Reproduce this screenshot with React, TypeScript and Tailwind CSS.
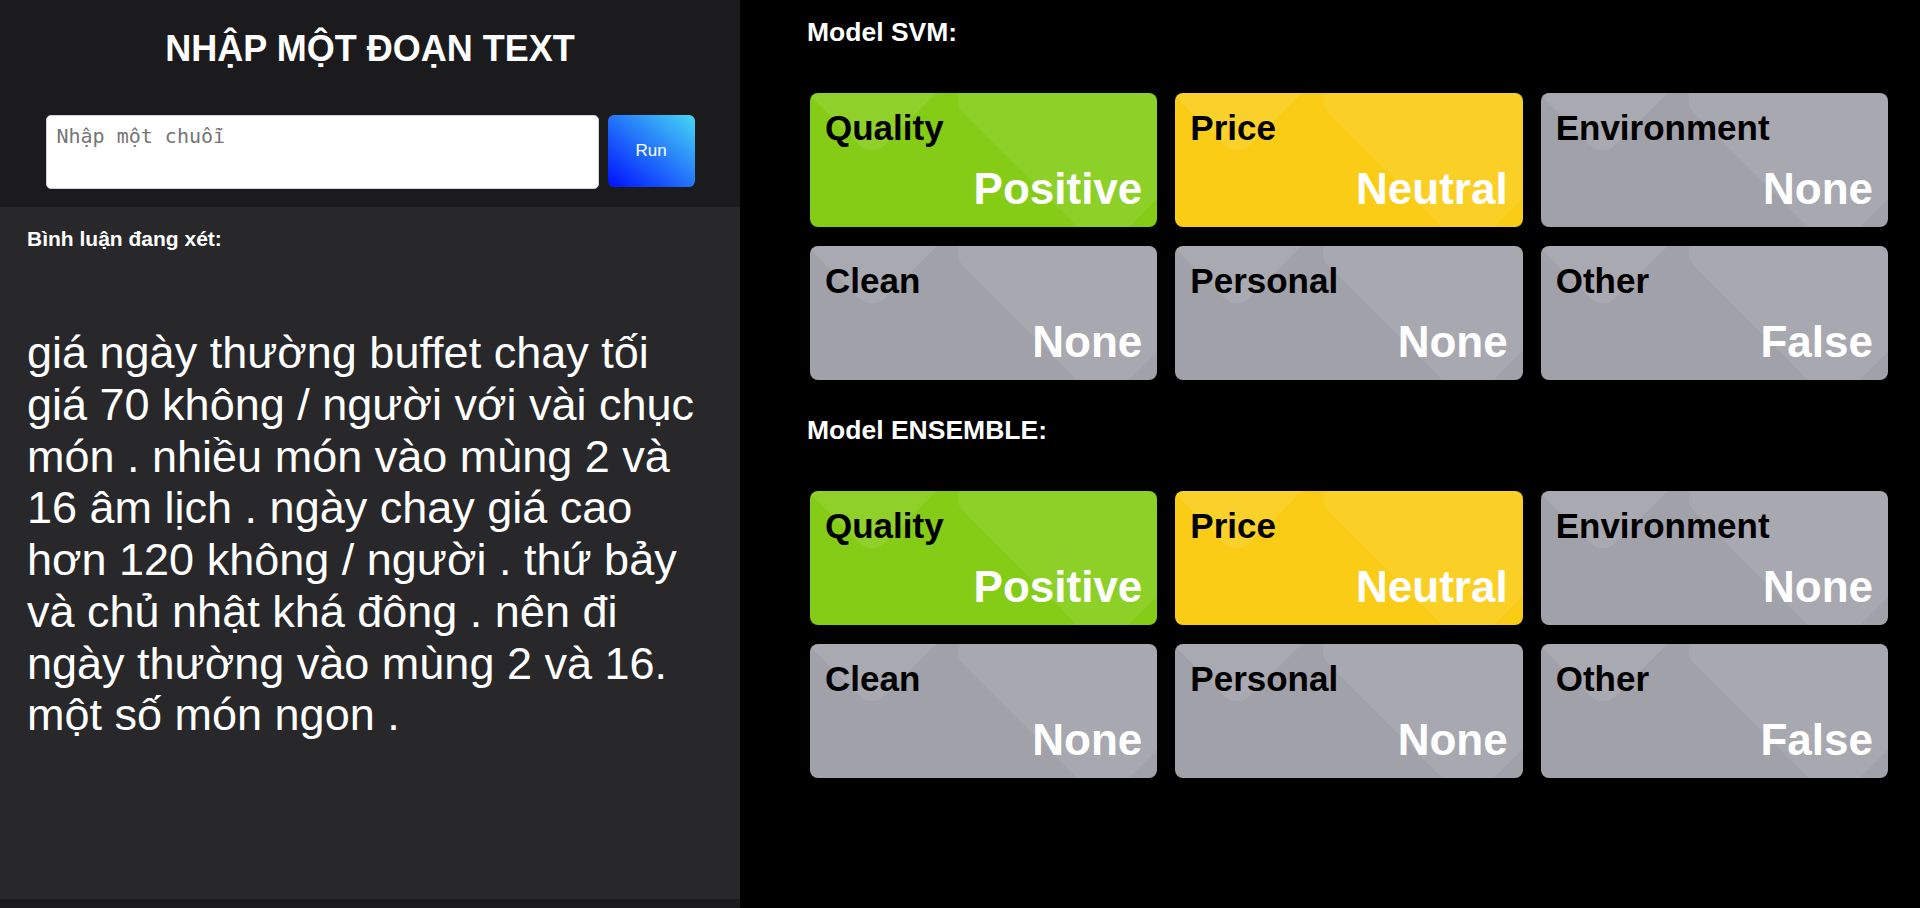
import React from 'react';

type Tone = 'positive' | 'neutral' | 'none';

const toneBg: Record<Tone, string> = {
  positive: 'bg-[#84cc16]',
  neutral: 'bg-[#facc15]',
  none: 'bg-[#a1a1aa]',
};

type Aspect = { label: string; value: string; tone: Tone };

const svm: Aspect[] = [
  { label: 'Quality', value: 'Positive', tone: 'positive' },
  { label: 'Price', value: 'Neutral', tone: 'neutral' },
  { label: 'Environment', value: 'None', tone: 'none' },
  { label: 'Clean', value: 'None', tone: 'none' },
  { label: 'Personal', value: 'None', tone: 'none' },
  { label: 'Other', value: 'False', tone: 'none' },
];

const ensemble: Aspect[] = [
  { label: 'Quality', value: 'Positive', tone: 'positive' },
  { label: 'Price', value: 'Neutral', tone: 'neutral' },
  { label: 'Environment', value: 'None', tone: 'none' },
  { label: 'Clean', value: 'None', tone: 'none' },
  { label: 'Personal', value: 'None', tone: 'none' },
  { label: 'Other', value: 'False', tone: 'none' },
];

function AspectCard({ label, value, tone }: Aspect) {
  return (
    <div
      className={`relative overflow-hidden rounded-lg h-[134px] flex flex-col justify-between pt-[15px] px-[15px] pb-[13px] ${toneBg[tone]}`}
    >
      {/* decorative diamonds */}
      <div className="pointer-events-none absolute left-[-46px] top-[-196px] w-[216px] h-[216px] rotate-45 rounded-[18px] bg-white/[0.09]" />
      <div className="pointer-events-none absolute left-[185px] top-[-101px] w-[216px] h-[216px] rotate-45 rounded-[18px] bg-white/[0.08]" />
      <div className="relative text-[35px] leading-[40px] font-bold text-black">{label}</div>
      <div className="relative text-[44px] leading-[50px] font-bold text-white text-right">{value}</div>
    </div>
  );
}

function ModelSection({ title, items, className }: { title: string; items: Aspect[]; className?: string }) {
  return (
    <section className={className}>
      <h2 className="text-[26.5px] leading-[30px] font-bold text-white">{title}</h2>
      <div className="mt-[46px] ml-[3px] w-[1078px] grid grid-cols-3 gap-x-[18px] gap-y-[19px]">
        {items.map((a) => (
          <AspectCard key={a.label} {...a} />
        ))}
      </div>
    </section>
  );
}

export default function App() {
  return (
    <div className="flex min-h-screen bg-black font-['Liberation_Sans',Arial,sans-serif]">
      <div className="w-[740px] shrink-0 flex flex-col bg-[#1b1b1d]">
        <div className="h-[207px] flex flex-col items-center pt-[28px] bg-[#1b1b1d]">
          <h1 className="text-[36px] leading-[41px] font-bold text-white">NHẬP MỘT ĐOẠN TEXT</h1>
          <div className="mt-[46px] flex items-start gap-[9px]">
            <textarea
              placeholder="Nhập một chuỗi"
              className="w-[553px] h-[74px] resize-none rounded-[5px] border border-[#d1d5db] bg-white px-[10px] py-[9px] text-[20px] leading-[23px] font-['DejaVu_Sans_Mono',monospace] text-black placeholder:text-[#757575] outline-none"
            />
            <button className="w-[87px] h-[72px] rounded-md bg-[linear-gradient(to_bottom_left,#46d8f5,#0010ff)] text-white text-[17px]">
              Run
            </button>
          </div>
        </div>
        <div className="h-[692px] bg-[#28282a] pl-[27px] pt-[20px]">
          <h3 className="text-[21px] leading-[24px] font-bold text-white">Bình luận đang xét:</h3>
          <p className="mt-[76px] w-[680px] text-[45px] leading-[51.75px] text-white">
            giá ngày thường buffet chay tối giá 70 không / người với vài chục món . nhiều món vào mùng 2 và 16 âm lịch .
            ngày chay giá cao hơn 120 không / người . thứ bảy và chủ nhật khá đông . nên đi ngày thường vào mùng 2 và
            16. một số món ngon .
          </p>
        </div>
      </div>
      <div className="flex-1 bg-black pl-[67px] pt-[17px]">
        <ModelSection title="Model SVM:" items={svm} />
        <ModelSection title="Model ENSEMBLE:" items={ensemble} className="mt-[35px]" />
      </div>
    </div>
  );
}
